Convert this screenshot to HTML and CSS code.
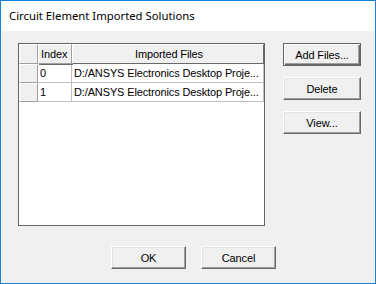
FILE: index.html
```html
<!DOCTYPE html>
<html>
<head>
<meta charset="utf-8">
<link rel="stylesheet" href="styles.css">
</head>
<body>
<div class="win">
  <div class="title">Circuit Element Imported Solutions</div>
  <div class="main">
    <div class="grid">
      <div class="hcell corner"></div>
      <div class="hcell left">Index</div>
      <div class="hcell center">Imported Files</div>
      <div class="hcell rowhead"></div>
      <div class="dcell">0</div>
      <div class="dcell">D:/ANSYS Electronics Desktop Proje...</div>
      <div class="hcell rowhead"></div>
      <div class="dcell">1</div>
      <div class="dcell">D:/ANSYS Electronics Desktop Proje...</div>
    </div>
    <div class="side">
      <button class="btn default">Add Files...</button>
      <button class="btn">Delete</button>
      <button class="btn">View...</button>
    </div>
  </div>
  <div class="footer">
    <button class="btn">OK</button>
    <button class="btn">Cancel</button>
  </div>
</div>
</body>
</html>
```
FILE: styles.css
```css
* { box-sizing: border-box; }
html, body { margin: 0; padding: 0; }
body { width: 376px; height: 284px; overflow: hidden; }
.win {
  width: 376px;
  height: 284px;
  border: 1px solid #1883d7;
  background: #f0f0f0;
  display: flex;
  flex-direction: column;
  font-family: "Liberation Sans", Arial, sans-serif;
  font-size: 11px;
  letter-spacing: -0.13px;
  color: #000;
}
.title {
  height: 30px;
  background: #fff;
  padding-left: 8px;
  line-height: 30px;
  font-family: "Noto Sans", sans-serif;
  font-size: 11.3px;
  letter-spacing: 0;
  color: #000;
}
.main {
  display: flex;
  padding: 12px 0 0 17px;
  gap: 18px;
}
.grid {
  width: 247px;
  height: 183px;
  border: 1px solid #646464;
  background: #fff;
  display: grid;
  grid-template-columns: 19px 34px 1fr;
  grid-template-rows: 20px 19px 19px;
  align-content: start;
}
.hcell {
  background: #f0f0f0;
  border-top: 1px solid #fff;
  border-left: 1px solid #fff;
  border-right: 1px solid #a0a0a0;
  border-bottom: 1px solid #a0a0a0;
  box-shadow: 1px 1px 0 #696969;
  position: relative;
  padding-left: 2px;
  line-height: 18px;
  white-space: nowrap;
}
.hcell.center { text-align: center; }
.grid > .hcell:nth-child(3) { box-shadow: none; border-right: 1px solid #696969; border-bottom: 1px solid #696969; }
.hcell.rowhead, .hcell.corner { box-shadow: none; border-right: 1px solid #a0a0a0; border-bottom: 1px solid #a0a0a0; }
.dcell {
  border-right: 1px solid #c0c0c0;
  border-bottom: 1px solid #c0c0c0;
  padding-left: 2px;
  line-height: 18px;
  white-space: nowrap;
  overflow: hidden;
}
.side {
  display: flex;
  flex-direction: column;
  gap: 11px;
}
.btn {
  width: 75px;
  height: 23px;
  padding: 0;
  background: #f0f0f0;
  border-top: 1px solid #fff;
  border-left: 1px solid #fff;
  border-right: 1px solid #696969;
  border-bottom: 1px solid #696969;
  box-shadow: inset -1px -1px 0 #a0a0a0, inset 1px 1px 0 #e3e3e3;
  font-family: "Liberation Sans", Arial, sans-serif;
  font-size: 11px;
  letter-spacing: -0.13px;
  color: #000;
}
.side .btn { width: 78px; }
.btn.default {
  border: 1px solid #646464;
  box-shadow: inset 1px 1px 0 #fff, inset -1px -1px 0 #696969, inset -2px -2px 0 #a0a0a0;
}
.footer {
  display: flex;
  justify-content: flex-start;
  gap: 15px;
  padding-top: 20px;
  padding-left: 110px;
}
```
